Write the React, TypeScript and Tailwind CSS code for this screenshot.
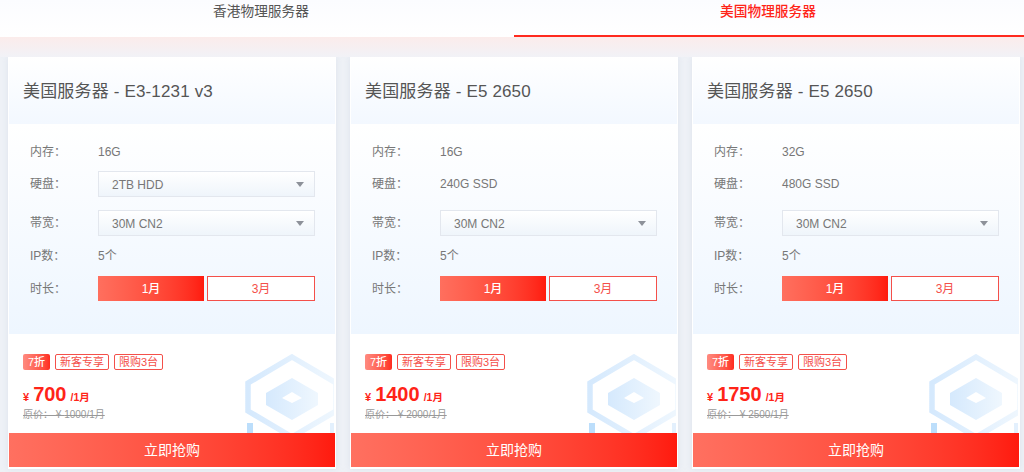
const plans = [
  { title: '美国服务器 - E3-1231 v3', memory: '16G', disk: '2TB HDD', diskSelect: true, price: '700', original: '1000' },
  { title: '美国服务器 - E5 2650', memory: '16G', disk: '240G SSD', diskSelect: false, price: '1400', original: '2000' },
  { title: '美国服务器 - E5 2650', memory: '32G', disk: '480G SSD', diskSelect: false, price: '1750', original: '2500' },
];

function Select({ value }: { value: string }) {
  return (
    <div className="flex h-[26px] w-[217px] items-center justify-between border border-[#e3e7ee] bg-gradient-to-b from-white to-[#eff5fb] pl-[13px] pr-[10px] pt-px text-[12px] text-[#777]">
      <span>{value}</span>
      <span className="h-0 w-0 border-x-[4px] border-t-[5px] border-x-transparent border-t-[#8d9199]" />
    </div>
  );
}

function Hexagon({ id }: { id: string }) {
  return (
    <svg className="absolute bottom-0 left-[236px] h-[79px] w-[89px]" viewBox="0 0 89 79">
      <defs>
        <linearGradient id={id} x1="0" x2="1" y1="0" y2="0">
          <stop offset="0" stopColor="#d5e9fd" />
          <stop offset="1" stopColor="#eff7fe" />
        </linearGradient>
      </defs>
      <path d="M47 3 L91 29 L91 57 L47 83 L3 57 L3 29 Z" fill="none" stroke={`url(#${id})`} strokeWidth="5.5" />
      <path d="M47 24 L73 39 L73 51 L47 66 L21 51 L21 39 Z M47 38 L37 44 L47 49 L57 44 Z" fill={`url(#${id})`} fillRule="evenodd" />
      <rect x="2" y="69" width="6" height="10" fill="#bcdefb" />
      <rect x="85" y="69" width="4" height="10" fill="#e3f0fd" />
    </svg>
  );
}

function Card({ plan, index }: { plan: (typeof plans)[number]; index: number }) {
  return (
    <div className="h-[412px] w-[328px] shrink-0 bg-white px-px shadow-[0_0_6px_rgba(190,200,220,0.35)]">
      <div className="flex h-[67px] items-center bg-gradient-to-b from-white to-[#f3f8ff] pl-[14px] pt-[2px] text-[17px] tracking-[0.16px] text-[#555]">
        {plan.title}
      </div>
      <div className="flex h-[210px] flex-col bg-gradient-to-b from-white to-[#eef6ff] pl-[21px] text-[12px] text-[#777]">
        <div className="mt-[20px] flex h-[16px] items-center">
          <span className="w-[68px]">内存：</span>
          <span>{plan.memory}</span>
        </div>
        <div className="mt-[11px] flex h-[26px] items-center">
          <span className="w-[68px]">硬盘：</span>
          {plan.diskSelect ? <Select value={plan.disk} /> : <span>{plan.disk}</span>}
        </div>
        <div className="mt-[13px] flex h-[26px] items-center">
          <span className="w-[68px]">帯宽：</span>
          <Select value="30M CN2" />
        </div>
        <div className="mt-[12px] flex h-[16px] items-center">
          <span className="w-[68px]">IP数：</span>
          <span>5个</span>
        </div>
        <div className="mt-[12px] flex h-[25px] items-center">
          <span className="w-[68px]">时长：</span>
          <div className="flex h-[25px] w-[106px] items-center justify-center bg-gradient-to-r from-[#ff6f5e] to-[#ff1a0e] font-medium text-white">1月</div>
          <div className="ml-[3px] flex h-[25px] w-[108px] items-center justify-center border border-[#f4504a] bg-white text-[#f4504a]">3月</div>
        </div>
      </div>
      <div className="relative h-[99px] overflow-hidden bg-white pl-[14px]">
        <Hexagon id={`hex-${index}`} />
        <div className="relative flex items-center gap-[5px] pt-[20px] text-[11px] leading-[14px]">
          <span className="flex h-[16px] w-[27px] items-center justify-center rounded-[2px] bg-gradient-to-r from-[#ff8a80] to-[#ff2a1e] font-medium text-white">7折</span>
          <span className="flex h-[16px] w-[54px] items-center justify-center rounded-[2px] border border-[#f4504a] text-[#f4504a]">新客专享</span>
          <span className="flex h-[16px] w-[49px] items-center justify-center rounded-[2px] border border-[#f4504a] text-[#f4504a]">限购3台</span>
        </div>
        <div className="relative mt-[9px] flex h-[24px] items-baseline font-bold text-[#ff2418]">
          <span className="text-[11px]">¥</span>
          <span className="ml-[4px] text-[20px]">{plan.price}</span>
          <span className="ml-[4px] text-[10.5px]">/1月</span>
        </div>
        <div className="relative mt-[5px] w-fit text-[10px] leading-[14px] text-[#999] line-through">
          原价： ¥ {plan.original}/1月
        </div>
      </div>
      <div className="flex h-[34px] items-center justify-center bg-gradient-to-r from-[#ff7060] to-[#ff1a0e] text-[14px] text-white">
        立即抢购
      </div>
    </div>
  );
}

export default function App() {
  return (
    <div className="h-[472px] w-[1024px] overflow-hidden bg-[#eef1f6] font-['Liberation_Sans','Noto_Sans_CJK_SC',sans-serif]">
      {/* Tabs */}
      <div className="flex h-[37px] bg-gradient-to-b from-[#fbfcff] to-white text-[13.7px]">
        <div className="flex w-[522px] items-start justify-center pt-[2px] text-[#555]">香港物理服务器</div>
        <div className="flex flex-1 items-start justify-center pr-[10px] pt-[2px] font-medium text-[#ff2418]">美国物理服务器</div>
      </div>
      <div className="relative h-[20px] bg-gradient-to-b from-[#fbeceb] to-[#f1f2f7]">
        <div className="absolute -top-[2px] right-0 h-[2px] w-[510px] bg-[#ff2a1e]" />
      </div>
      {/* Plans */}
      <div className="flex gap-[14px] pl-[8px]">
        {plans.map((plan, i) => (
          <Card key={i} plan={plan} index={i} />
        ))}
      </div>
    </div>
  );
}
